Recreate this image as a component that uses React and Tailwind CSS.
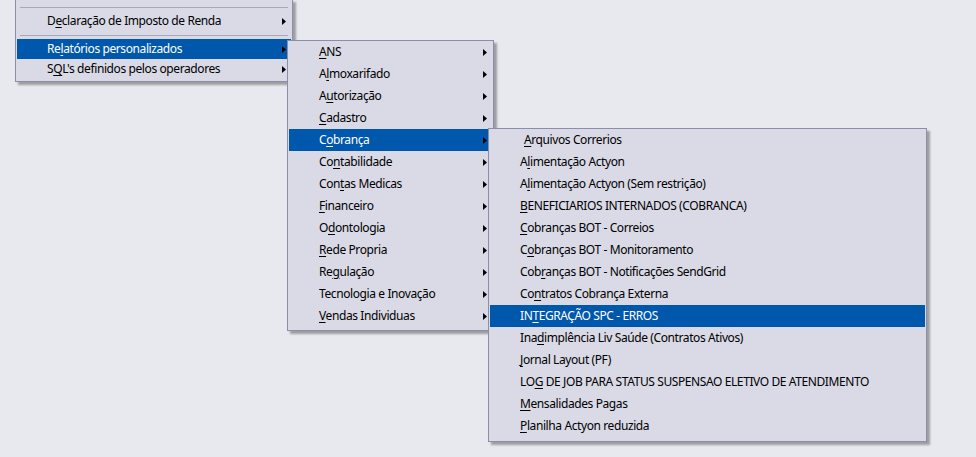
import React from "react";

const Arrow = () => (
  <svg width="4" height="7" viewBox="0 0 4 7" className="shrink-0">
    <path d="M0 0 L4 3.5 L0 7 Z" fill="#000" />
  </svg>
);

const Label = ({ t }) => (
  <span className="whitespace-nowrap">
    {t[0]}
    {t[1] ? <u className="underline underline-offset-[2px] decoration-1">{t[1]}</u> : null}
    {t[2]}
  </span>
);

const Row = ({ t, active, arrow, h = "h-[22px]", extra = "" }) => (
  <div
    className={`flex items-center justify-between pl-[30px] pr-[5px] ${h} ${
      active ? "bg-[#0058ac] text-white" : "text-black"
    }`}
  >
    <span className={extra}>
      <Label t={t} />
    </span>
    {arrow ? <Arrow /> : null}
  </div>
);

const Sep = () => <div className="h-px bg-[#a6a8b8] mx-[3px]" />;

const menu2 = [
  ["", "A", "NS"],
  ["A", "l", "moxarifado"],
  ["A", "u", "torização"],
  ["", "C", "adastro"],
  ["C", "o", "brança"],
  ["Co", "n", "tabilidade"],
  ["Con", "t", "as Medicas"],
  ["", "F", "inanceiro"],
  ["O", "d", "ontologia"],
  ["", "R", "ede Propria"],
  ["Re", "g", "ulação"],
  ["Tecnologia e Inovação", "", ""],
  ["", "V", "endas Individuas"],
];

const menu3 = [
  ["", "A", "rquivos Correrios"],
  ["A", "l", "imentação Actyon"],
  ["A", "l", "imentação Actyon (Sem restrição)"],
  ["", "B", "ENEFICIARIOS INTERNADOS (COBRANCA)"],
  ["", "C", "obranças BOT - Correios"],
  ["C", "o", "branças BOT - Monitoramento"],
  ["Cob", "r", "anças BOT - Notificações SendGrid"],
  ["Co", "n", "tratos Cobrança Externa"],
  ["IN", "T", "EGRAÇÃO SPC - ERROS"],
  ["Ina", "d", "implência Liv Saúde (Contratos Ativos)"],
  ["", "J", "ornal Layout (PF)"],
  ["LO", "G", " DE JOB PARA STATUS SUSPENSAO ELETIVO DE ATENDIMENTO"],
  ["", "M", "ensalidades Pagas"],
  ["", "P", "lanilha Actyon reduzida"],
];

const menuCls =
  "absolute bg-[#d9dae6] border border-[#8a8fa9] shadow-[3px_3px_2px_rgba(0,0,0,0.32)]";

export default function App() {
  return (
    <div
      className="relative w-[976px] h-[457px] overflow-hidden bg-[#e7e9ee] text-[12px] leading-none tracking-[-0.4px]"
      style={{ fontFamily: '"Segoe UI", "Noto Sans", sans-serif' }}
    >
      {/* Menu 1 */}
      <div className={`${menuCls} left-[15px] top-[-1px] w-[278px] border-t-0 px-px pb-[2px]`}>
        <div className="h-[8px]" />
        <Sep />
        <div className="h-[3px]" />
        <Row t={["D", "e", "claração de Imposto de Renda"]} arrow h="h-[20px]" />
        <div className="h-[4px]" />
        <Sep />
        <div className="h-[3px]" />
        <Row t={["Re", "l", "atórios personalizados"]} arrow active h="h-[20px]" />
        <Row t={["S", "Q", "L's definidos pelos operadores"]} arrow h="h-[20px]" />
      </div>

      {/* Menu 2 */}
      <div className={`${menuCls} left-[287px] top-[40px] w-[207px] px-px pb-[3px]`}>
        {menu2.map((t, i) => (
          <Row key={i} t={t} arrow active={i === 4} />
        ))}
      </div>

      {/* Menu 3 */}
      <div className={`${menuCls} left-[488px] top-[128px] w-[439px] px-px pb-[4px]`}>
        {menu3.map((t, i) => (
          <Row key={i} t={t} active={i === 8} extra={i === 0 ? "ml-[4px]" : ""} />
        ))}
      </div>
    </div>
  );
}
